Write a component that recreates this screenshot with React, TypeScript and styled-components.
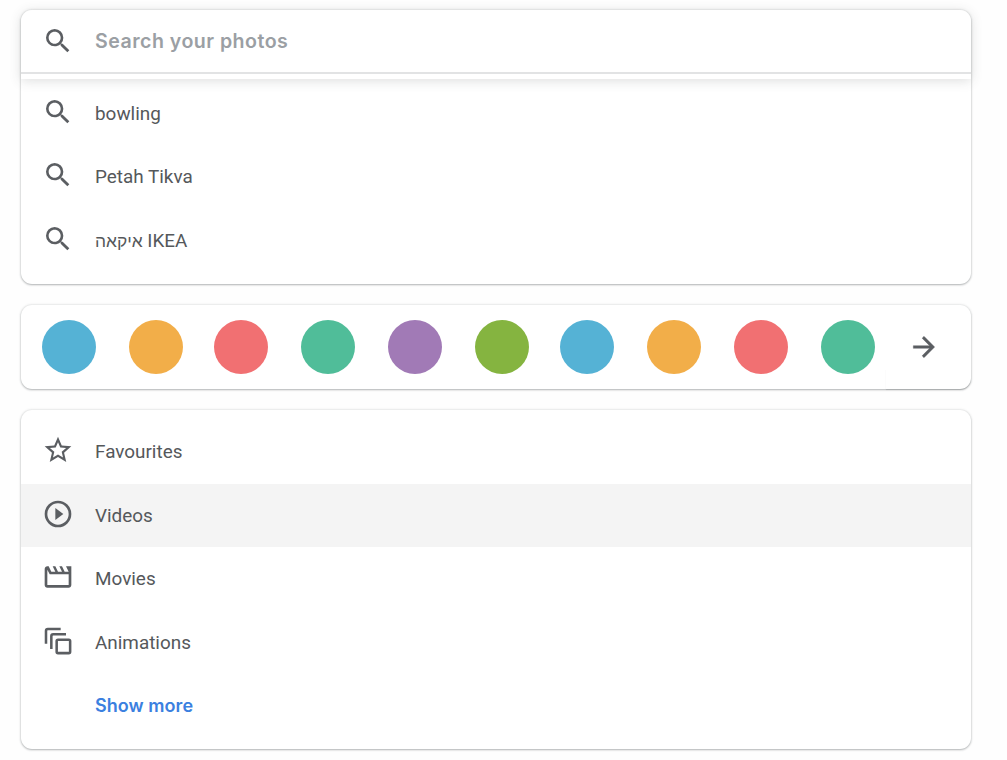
import React from 'react';
import styled, { createGlobalStyle, css } from 'styled-components';

const GlobalStyle = createGlobalStyle`
  * { box-sizing: border-box; }
  body { margin: 0; background: #fefefe; font-family: Roboto, "Liberation Sans", sans-serif; }
`;

const Page = styled.main`
  display: flex;
  flex-direction: column;
  gap: 21px;
  width: 1007px;
  height: 760px;
  padding: 10px 36px 0 21px;
`;

const Card = styled.section<{ $height: number }>`
  position: relative;
  flex: none;
  height: ${p => p.$height}px;
  border-radius: 11px;
  background: #fff;
  box-shadow: 0 1px 2px rgba(60, 64, 67, 0.32), 0 0 2px 1px rgba(60, 64, 67, 0.1);
`;

const SearchBar = styled.div`
  position: relative;
  display: flex;
  align-items: center;
  height: 69px;
  padding: 0 0 7px 21px;
  border-radius: 11px 11px 0 0;
  background: linear-gradient(#e2e3e4, #e2e3e4) 0 62px / 100% 2px no-repeat #fff;
  box-shadow: 0 2px 12px rgba(60, 64, 67, 0.17);
`;

const Placeholder = styled.span`
  margin-left: 21px;
  font: 600 19.6px/28px Inter, sans-serif;
  letter-spacing: 0.47px;
  color: #9b9fa4;
`;

const List = styled.ul<{ $top: number }>`
  margin: 0;
  padding: ${p => p.$top}px 0 0;
  list-style: none;
`;

const Row = styled.li<{ $active?: boolean }>`
  display: flex;
  align-items: center;
  height: 63.5px;
  padding: 0 0 0 21px;
  ${p => p.$active && css`background: #f4f4f4;`}
`;

const Icon = styled.svg`
  flex: none;
  width: 32px;
  height: 32px;
  fill: #5b5e62;
`;

const RowIcon = styled(Icon)`
  margin-bottom: 4px;
`;

const Label = styled.span`
  margin-left: 21px;
  font-size: 18.9px;
  line-height: 26px;
  color: #55585b;
`;

const Hebrew = styled.span`
  font-family: "Liberation Sans", sans-serif;
  font-size: 17.4px;
`;

const ShowMore = styled.a`
  margin-left: 53px;
  font: 600 18px/26px Inter, sans-serif;
  letter-spacing: 0.05px;
  color: #3b80e0;
`;

const People = styled.div`
  display: flex;
  align-items: center;
  height: 100%;
  padding: 0 31px 0 21px;
`;

const Avatars = styled.div`
  display: flex;
  gap: 33px;
`;

const Avatar = styled.span<{ $color: string }>`
  width: 54px;
  height: 54px;
  border-radius: 50%;
  background: ${p => p.$color};
  &:nth-child(4n + 3) { margin-left: -2px; }
`;

const NextIcon = styled(Icon)`
  margin-left: auto;
  stroke: #5b5e62;
  stroke-width: 0.3;
  stroke-linejoin: round;
`;

const NextEdge = styled.span`
  position: absolute;
  right: 0;
  bottom: 0;
  width: 85px;
  height: 20px;
  border-radius: 0 0 11px 0;
  box-shadow: 0 1px 1px rgba(60, 64, 67, 0.18);
`;

const SearchGlyph = () => (
  <path d="M15.5 14h-.79l-.28-.27A6.471 6.471 0 0 0 16 9.5 6.5 6.5 0 1 0 9.5 16c1.61 0 3.09-.59 4.23-1.57l.27.28v.79l5 4.99L20.49 19l-4.99-5zm-6 0C7.01 14 5 11.99 5 9.5S7.01 5 9.5 5 14 7.01 14 9.5 11.99 14 9.5 14z" />
);

const glyphs = {
  star: <path d="M22 9.24l-7.19-.62L12 2 9.19 8.63 2 9.24l5.46 4.73L5.82 21 12 17.27 18.18 21l-1.63-7.03L22 9.24zM12 15.4l-3.76 2.27 1-4.28-3.32-2.88 4.38-.38L12 6.1l1.71 4.04 4.38.38-3.32 2.88 1 4.28L12 15.4z" />,
  play: <path d="M10 16.5l6-4.5-6-4.5v9zM12 2a10 10 0 1 0 0 20 10 10 0 0 0 0-20zm0 18a8 8 0 1 1 0-16 8 8 0 0 1 0 16z" />,
  movie: <path d="M4 6.47L5.76 10H20v8H4V6.47M22 4h-4l2 4h-3l-2-4h-2l2 4h-3l-2-4H8l2 4H7L5 4H4c-1.1 0-1.99.9-1.99 2L2 18c0 1.1.9 2 2 2h16c1.1 0 2-.9 2-2V4z" />,
  stack: (
    <g fill="none" stroke="#5b5e62" strokeWidth="1.9">
      <path d="M3 14V4.4Q3 3 4.4 3H14" />
      <path d="M7 18V8.4Q7 7 8.4 7H18" />
      <rect x="11" y="11" width="10.1" height="10.1" rx="1" />
    </g>
  ),
};

const recent = [
  { id: 'bowling', text: 'bowling' },
  { id: 'petah-tikva', text: 'Petah Tikva' },
  { id: 'ikea', text: <><Hebrew>איקאה</Hebrew> IKEA</> },
];
const colors = ['#55b2d5', '#f2ae49', '#f17072', '#50bd99', '#a17ab6', '#85b440', '#55b2d5', '#f2ae49', '#f17072', '#50bd99'];
const categories: { icon: keyof typeof glyphs; label: string; active?: boolean }[] = [
  { icon: 'star', label: 'Favourites' },
  { icon: 'play', label: 'Videos', active: true },
  { icon: 'movie', label: 'Movies' },
  { icon: 'stack', label: 'Animations' },
];

export default function App() {
  return (
    <>
      <GlobalStyle />
      <Page>
        <Card $height={274}>
          <SearchBar>
            <Icon viewBox="0 0 24 24"><SearchGlyph /></Icon>
            <Placeholder>Search your photos</Placeholder>
          </SearchBar>
          <List $top={3}>
            {recent.map(({ id, text }) => (
              <Row key={id}>
                <RowIcon viewBox="0 0 24 24"><SearchGlyph /></RowIcon>
                <Label>{text}</Label>
              </Row>
            ))}
          </List>
        </Card>
        <Card $height={84}>
          <People>
            <Avatars>
              {colors.map((color, i) => <Avatar key={i} $color={color} />)}
            </Avatars>
            <NextIcon viewBox="0 0 24 24">
              <path d="M12 4l-1.41 1.41L16.17 11H4v2h12.17l-5.58 5.59L12 20l8-8z" />
            </NextIcon>
          </People>
          <NextEdge />
        </Card>
        <Card $height={339}>
          <List $top={10.3}>
            {categories.map(({ icon, label, active }) => (
              <Row key={label} $active={active}>
                <RowIcon viewBox="0 0 24 24">{glyphs[icon]}</RowIcon>
                <Label>{label}</Label>
              </Row>
            ))}
            <Row><ShowMore>Show more</ShowMore></Row>
          </List>
        </Card>
      </Page>
    </>
  );
}
